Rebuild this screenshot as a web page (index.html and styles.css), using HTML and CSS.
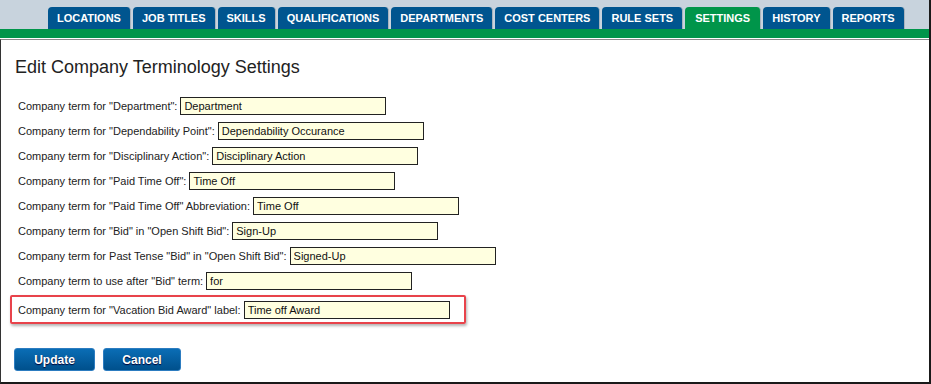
FILE: index.html
```html
<!DOCTYPE html>
<html lang="en">
<head>
  <meta charset="UTF-8">
  <title>Settings</title>
  <link rel="stylesheet" href="styles.css">
</head>
<body>
  <div class="page">
    <div class="topbar">
      <a class="tab">LOCATIONS</a>
      <a class="tab">JOB TITLES</a>
      <a class="tab">SKILLS</a>
      <a class="tab">QUALIFICATIONS</a>
      <a class="tab">DEPARTMENTS</a>
      <a class="tab">COST CENTERS</a>
      <a class="tab">RULE SETS</a>
      <a class="tab active">SETTINGS</a>
      <a class="tab">HISTORY</a>
      <a class="tab">REPORTS</a>
    </div>
    <div class="greenbar"></div>

    <div class="content">
      <h2>Edit Company Terminology Settings</h2>

      <form class="terms">
        <div class="row">
          <label>Company term for "Department":</label>
          <input type="text" value="Department">
        </div>
        <div class="row">
          <label>Company term for "Dependability Point":</label>
          <input type="text" value="Dependability Occurance">
        </div>
        <div class="row">
          <label>Company term for "Disciplinary Action":</label>
          <input type="text" value="Disciplinary Action">
        </div>
        <div class="row">
          <label>Company term for "Paid Time Off":</label>
          <input type="text" value="Time Off">
        </div>
        <div class="row">
          <label>Company term for "Paid Time Off" Abbreviation:</label>
          <input type="text" value="Time Off">
        </div>
        <div class="row">
          <label>Company term for "Bid" in "Open Shift Bid":</label>
          <input type="text" value="Sign-Up">
        </div>
        <div class="row">
          <label>Company term for Past Tense "Bid" in "Open Shift Bid":</label>
          <input type="text" value="Signed-Up">
        </div>
        <div class="row">
          <label>Company term to use after "Bid" term:</label>
          <input type="text" value="for">
        </div>
        <div class="row highlight">
          <label>Company term for "Vacation Bid Award" label:</label>
          <input type="text" value="Time off Award">
        </div>

        <div class="buttons">
          <button type="submit" class="btn">Update</button>
          <button type="button" class="btn">Cancel</button>
        </div>
      </form>
    </div>
  </div>
</body>
</html>
```

FILE: styles.css
```css
body {
  margin: 0;
  font-family: "Liberation Sans", Arial, sans-serif;
  background: #fff;
}
.page {
  width: 931px;
  height: 384px;
  box-sizing: border-box;
  border-right: 2px solid #1a1a1a;
  display: flex;
  flex-direction: column;
}
.topbar {
  background: #c8d3dd;
  height: 29px;
  padding-left: 48px;
  display: flex;
  align-items: flex-end;
  gap: 2px;
}
.tab {
  flex-shrink: 0;
  white-space: nowrap;
  height: 22px;
  line-height: 23px;
  padding: 0 9px;
  background: #00558f;
  color: #fff;
  font-weight: bold;
  font-size: 11px;
  border-radius: 4px 4px 0 0;
  border-right: 1px solid #a9b4be;
}
.tab.active {
  background: #00954a;
  padding: 0 10px;
}
.greenbar {
  height: 9px;
  background: #00954a;
  border-bottom: 1px solid #fff;
}
.content {
  flex: 1;
  border-top: 1px solid #8a8a8a;
  border-left: 1px solid #333;
  border-bottom: 2px solid #1a1a1a;
  padding: 0 0 0 13px;
}
h2 {
  font-size: 18px;
  font-weight: normal;
  color: #222;
  margin: 17px 0 15px 1px;
}
.terms {
  font-size: 11px;
  color: #222;
}
.row {
  display: flex;
  align-items: center;
  height: 25px;
  padding-left: 4px;
}
.row label {
  margin-right: 3px;
  white-space: nowrap;
}
.row input {
  width: 206px;
  height: 18px;
  box-sizing: border-box;
  border: 1px solid #222;
  background: #ffffe0;
  font-family: inherit;
  font-size: 11px;
  padding: 0 3px;
  color: #111;
}
.highlight {
  box-sizing: border-box;
  margin-left: -4px;
  margin-top: 2px;
  width: 456px;
  height: 29px;
  padding-left: 6px;
  border: 2px solid #e8434b;
  border-radius: 2px;
  box-shadow: 1px 2px 3px rgba(0, 0, 0, 0.3);
}
.buttons {
  display: flex;
  gap: 8px;
  margin-top: 24px;
}
.btn {
  width: 81px;
  height: 23px;
  border: 1px solid #2c7cc0;
  border-radius: 3px;
  background: linear-gradient(#0a6db5, #00508c);
  color: #fff;
  font-family: inherit;
  font-weight: bold;
  font-size: 12px;
  text-shadow: 0 1px 1px #003;
  cursor: pointer;
}
.btn + .btn {
  width: 78px;
}
```
